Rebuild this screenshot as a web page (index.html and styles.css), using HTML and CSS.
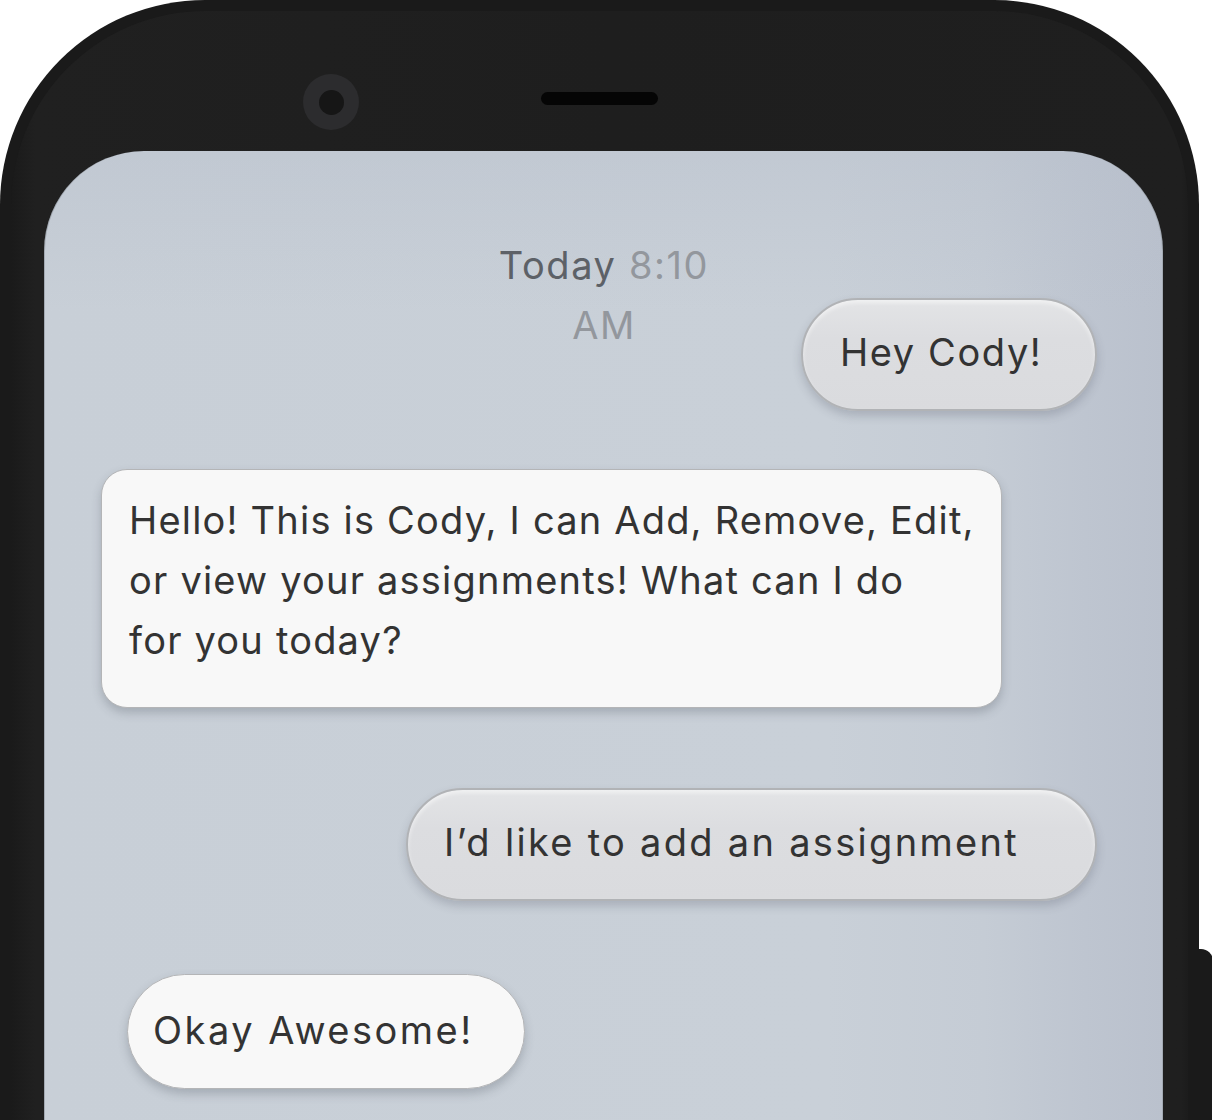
FILE: index.html
```html
<!DOCTYPE html>
<html lang="en">
<head>
<meta charset="utf-8">
<title>Cody chat</title>
<link rel="stylesheet" href="styles.css">
</head>
<body>
<div class="device">
  <div class="phone">
    <div class="bezel">
      <div class="camera"><div class="lens"></div></div>
      <div class="speaker"></div>
    </div>
    <div class="screen">
      <div class="timestamp"><span class="day">Today</span> <span class="time">8:10</span> <span class="time">AM</span></div>
      <div class="bubble sent hey">Hey Cody!</div>
      <div class="bubble received hello">Hello! This is Cody, I can Add, Remove, Edit,<br>or view your assignments! What can I do<br>for you today?</div>
      <div class="bubble sent add">I’d like to add an assignment</div>
      <div class="bubble received okay">Okay Awesome!</div>
    </div>
  </div>
  <div class="side-button"></div>
</div>
</body>
</html>
```

FILE: styles.css
```css
html, body {
  margin: 0;
  padding: 0;
  background: #ffffff;
  overflow: hidden;
  height: 1120px;
}

.device {
  position: relative;
  width: 1212px;
  height: 1120px;
}

.phone {
  box-sizing: border-box;
  width: 1199px;
  height: 1160px;
  background: linear-gradient(to right, #1a1a1a 0, #202020 24px, #1e1e1e 600px, #1f1f1f 1170px, #1c1c1c 100%);
  border: 11px solid #1a1a1a;
  border-bottom: none;
  border-radius: 205px 205px 0 0;
  display: flex;
  flex-direction: column;
}

.bezel {
  height: 140px;
  flex: none;
  display: flex;
  align-items: flex-start;
  padding: 63px 0 0 292px;
  box-sizing: border-box;
}

.camera {
  width: 56px;
  height: 56px;
  border-radius: 50%;
  background: #2c2c2e;
  display: flex;
  align-items: center;
  justify-content: center;
}

.lens {
  width: 25px;
  height: 25px;
  border-radius: 50%;
  background: #161616;
}

.speaker {
  width: 117px;
  height: 13px;
  border-radius: 7px;
  background: #050505;
  margin: 18px 0 0 182px;
}

.screen {
  flex: 1;
  margin: 0 25px 0 33px;
  border-radius: 100px 100px 0 0;
  background:
    linear-gradient(to bottom, rgba(180, 188, 201, 0.35) 0, rgba(180, 188, 201, 0) 160px),
    linear-gradient(to right, #c8cfd7 0, #c9d0d8 70%, #c5ccd5 84%, #bec5d0 93%, #bac1cd 100%);
  box-shadow: inset 1px 0 0 #a3aab3, inset -1px 0 0 #a3aab3;
  display: flex;
  flex-direction: column;
  padding: 84px 66px 0 57px;
  font-family: "Inter", "Open Sans", sans-serif;
  font-size: 38px;
  letter-spacing: 1.6px;
  color: #333333;
}

.timestamp {
  align-self: center;
  max-width: 250px;
  text-align: center;
  line-height: 60px;
  padding-left: 10px;
}

.day {
  color: #5d6167;
}

.time {
  color: #93979d;
}

.bubble {
  box-sizing: border-box;
  line-height: 60px;
  white-space: nowrap;
}

.sent {
  align-self: flex-end;
  height: 113px;
  border-radius: 57px;
  background: linear-gradient(to bottom, #e3e4e6 0%, #dcdde0 35%, #dadbde 100%);
  border: 2px solid #b1b3b6;
  box-shadow: 0 5px 10px rgba(60, 66, 80, 0.22), inset 0 3px 4px rgba(255, 255, 255, 0.5);
  display: flex;
  align-items: center;
  padding-bottom: 5px;
}

.received {
  align-self: flex-start;
  background: #f8f8f8;
  border: 1.5px solid #b4b5b7;
  box-shadow: 0 5px 10px rgba(60, 66, 80, 0.25);
}

.hey {
  width: 296px;
  margin-top: -57px;
  padding-left: 37px;
}

.hello {
  width: 901px;
  margin-top: 58px;
  border-radius: 26px;
  padding: 20px 0 37px 27px;
  letter-spacing: 1.2px;
}

.add {
  width: 691px;
  margin-top: 80px;
  padding-left: 36px;
  letter-spacing: 2.3px;
}

.okay {
  width: 398px;
  height: 115px;
  margin-top: 73px;
  margin-left: 26px;
  border-radius: 58px;
  display: flex;
  align-items: center;
  padding: 0 0 4px 25px;
  letter-spacing: 2.5px;
}

.side-button {
  position: absolute;
  left: 1199px;
  top: 949px;
  width: 14px;
  height: 200px;
  background: #1a1a1a;
  border-radius: 0 12px 0 0;
}
```
